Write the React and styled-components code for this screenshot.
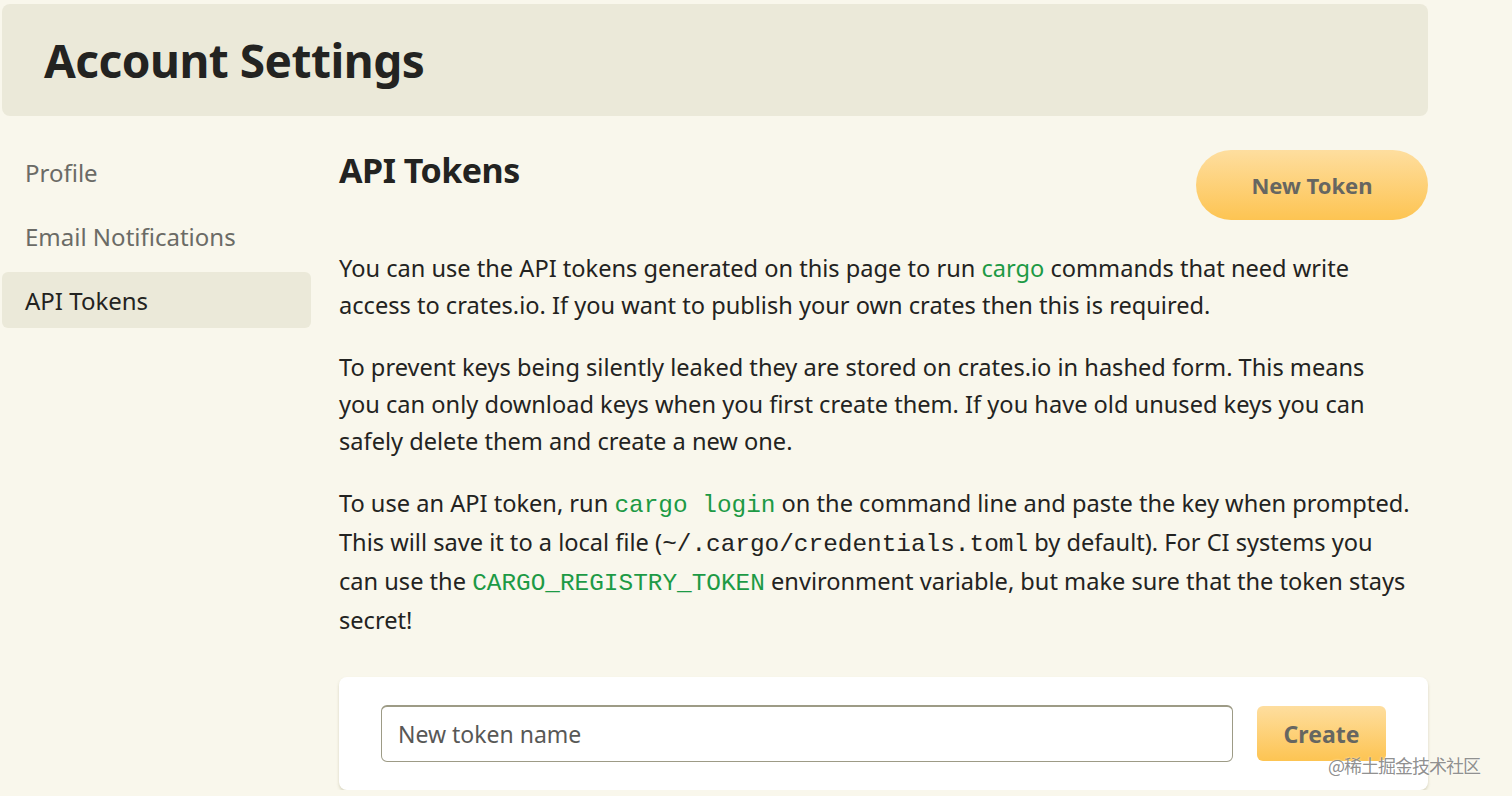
import React from "react"
import styled, { createGlobalStyle } from "styled-components"

const GlobalStyle = createGlobalStyle`
  html, body {
    margin: 0;
    padding: 0;
    background: #f9f7ec;
  }
  body {
    font-family: "Noto Sans", "Open Sans", sans-serif;
    color: #232321;
  }
`

const Page = styled.div`
  position: relative;
  width: 1426px;
  padding: 4px 0 0 2px;
`

const Header = styled.header`
  height: 112px;
  background: #ebe9d9;
  border-radius: 8px;
  display: flex;
  align-items: center;
  padding-left: 42px;
  box-sizing: border-box;
`

const Title = styled.h1`
  margin: 0;
  font-size: 46px;
  font-weight: 700;
  letter-spacing: -0.5px;
  color: #232321;
`

const Layout = styled.div`
  display: grid;
  grid-template-columns: 309px 1fr;
  column-gap: 28px;
  padding-top: 28px;
`

const Sidebar = styled.nav`
  display: flex;
  flex-direction: column;
  gap: 8px;
`

const NavItem = styled.a`
  display: flex;
  align-items: center;
  height: 56px;
  padding-left: 23px;
  border-radius: 6px;
  font-size: 24px;
  color: ${ p => p.active ? "#232321" : "#6b6b66" };
  background: ${ p => p.active ? "#ebe9d9" : "transparent" };
  cursor: pointer;
`

const Main = styled.main`
  display: flex;
  flex-direction: column;
`

const TitleRow = styled.div`
  display: flex;
  justify-content: space-between;
  align-items: flex-start;
  margin-bottom: 30px;
`

const SubTitle = styled.h2`
  margin: 0;
  padding-top: 3px;
  font-size: 34px;
  font-weight: 700;
  letter-spacing: -0.5px;
  color: #232321;
`

const PillButton = styled.button`
  margin-top: 6px;
  width: 232px;
  height: 70px;
  border: none;
  border-radius: 35px;
  background: linear-gradient(to bottom, #fede9f, #fdc452);
  color: #666661;
  font-family: inherit;
  font-size: 22px;
  font-weight: 700;
  cursor: pointer;
`

const Para = styled.p`
  margin: 0 0 25px;
  font-size: 23.6px;
  line-height: 37px;
  color: #232321;
`

const Link = styled.a`
  color: #1d9a45;
  text-decoration: none;
`

const Code = styled.code`
  font-family: "Liberation Mono", "Courier New", monospace;
  font-size: 24.4px;
  color: ${ p => p.plain ? "#232321" : "#1d9a45" };
`

const FormCard = styled.form`
  margin-top: 13px;
  height: 113px;
  box-sizing: border-box;
  background: #ffffff;
  border-radius: 8px;
  box-shadow: 0 2px 3px rgba(120, 110, 60, 0.25);
  display: flex;
  align-items: center;
  gap: 24px;
  padding: 0 42px;
`

const Input = styled.input`
  flex: 1;
  height: 57px;
  box-sizing: border-box;
  border: 1px solid #9d9b86;
  border-top-width: 2px;
  border-radius: 6px;
  padding: 0 16px;
  font-family: inherit;
  font-size: 23px;
  color: #232321;
  outline: none;
  &::placeholder {
    color: #585856;
  }
`

const CreateButton = styled.button`
  width: 129px;
  height: 55px;
  border: none;
  border-radius: 6px;
  background: linear-gradient(to bottom, #fede9f, #fdc452);
  color: #666661;
  font-family: inherit;
  font-size: 23px;
  font-weight: 700;
`

const Watermark = styled.div`
  position: absolute;
  left: 1328px;
  top: 752px;
  z-index: 10;
  white-space: nowrap;
  font-family: "Noto Sans CJK SC", sans-serif;
  font-size: 18px;
  letter-spacing: -1px;
  color: rgba(130, 130, 130, 0.9);
  text-shadow: 0 0 2px rgba(255, 255, 255, 0.8);
`

export default function App() {
  return (
    <Page>
      <GlobalStyle />
      <Header>
        <Title>Account Settings</Title>
      </Header>
      <Layout>
        <Sidebar>
          <NavItem>Profile</NavItem>
          <NavItem>Email Notifications</NavItem>
          <NavItem active>API Tokens</NavItem>
        </Sidebar>
        <Main>
          <TitleRow>
            <SubTitle>API Tokens</SubTitle>
            <PillButton type="button">New Token</PillButton>
          </TitleRow>
          <Para>
            You can use the API tokens generated on this page to run <Link>cargo</Link> commands that need write<br />
            access to crates.io. If you want to publish your own crates then this is required.
          </Para>
          <Para>
            To prevent keys being silently leaked they are stored on crates.io in hashed form. This means<br />
            you can only download keys when you first create them. If you have old unused keys you can<br />
            safely delete them and create a new one.
          </Para>
          <Para>
            To use an API token, run <Code>cargo login</Code> on the command line and paste the key when prompted.<br />
            This will save it to a local file (<Code plain>~/.cargo/credentials.toml</Code> by default). For CI systems you<br />
            can use the <Code>CARGO_REGISTRY_TOKEN</Code> environment variable, but make sure that the token stays<br />
            secret!
          </Para>
          <FormCard onSubmit={ e => e.preventDefault() }>
            <Input placeholder="New token name" />
            <CreateButton type="submit">Create</CreateButton>
          </FormCard>
        </Main>
      </Layout>
      <Watermark>@稀土掘金技术社区</Watermark>
    </Page>
  )
}
